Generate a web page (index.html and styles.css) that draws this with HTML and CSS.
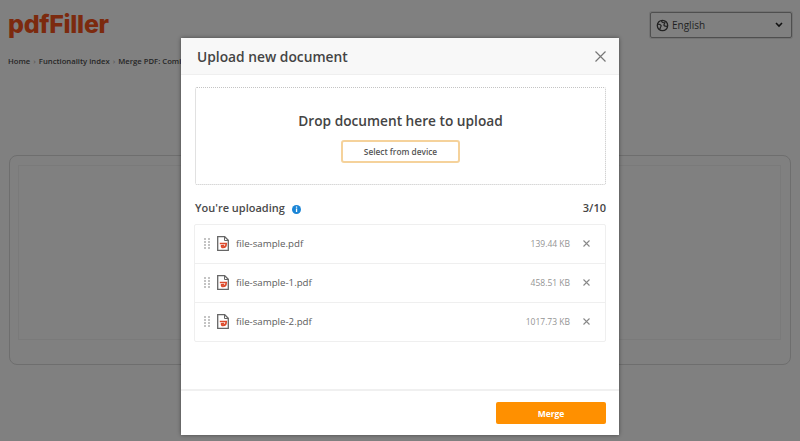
FILE: index.html
```html
<!DOCTYPE html>
<html lang="en">
<head>
<meta charset="utf-8">
<title>Upload new document</title>
<link rel="stylesheet" href="styles.css">
</head>
<body>
<div class="page">
  <header class="top">
    <div class="logo">pdfFiller</div>
    <div class="lang">
      <svg class="globe" width="13" height="13" viewBox="0 0 14 14"><circle cx="7" cy="7" r="5.6" fill="none" stroke="#222" stroke-width="1.4"/><path d="M2 5.5c2 0 3 .5 3.500 1.500s-1 1.500-1 3l-.5 1.500M12 8c-2 0-3.500-.5-3.500-1.500S10 5 9.500 2.500M6 2c0 1.500 1 2 2.500 2" fill="none" stroke="#222" stroke-width="1.300"/></svg>
      <span class="lang-name">English</span>
      <svg class="caret" width="8" height="6" viewBox="0 0 8 6"><path d="M1 1l3 3 3-3" fill="none" stroke="#111" stroke-width="1.600"/></svg>
    </div>
  </header>
  <nav class="crumbs"><span>Home</span><i>›</i><span>Functionality index</span><i>›</i><span>Merge PDF: Comi</span></nav>
  <section class="card"><div class="card-inner"></div></section>
</div>

<div class="modal">
  <div class="modal-head">
    <h1>Upload new document</h1>
    <svg class="close" width="11" height="11" viewBox="0 0 11 11"><path d="M.5.500l10 10M10.500.500l-10 10" stroke="#777" stroke-width="1.200" fill="none"/></svg>
  </div>
  <div class="modal-body">
    <div class="drop">
      <h2>Drop document here to upload</h2>
      <button class="select">Select from device</button>
    </div>
    <div class="up-head">
      <div class="up-title">You're uploading
        <svg class="info" width="9" height="9" viewBox="0 0 9 9"><circle cx="4.500" cy="4.500" r="4.500" fill="#1a85d6"/><rect x="3.900" y="1.500" width="1.300" height="1.200" fill="#fff"/><rect x="3.900" y="3.500" width="1.300" height="3.500" fill="#fff"/></svg>
      </div>
      <div class="up-count">3/10</div>
    </div>
    <ul class="files">
      <li class="file">
        <svg class="grip" width="6" height="11" viewBox="0 0 6 11"><g fill="#c4c4c4"><rect width="2" height="2"/><rect x="4" width="2" height="2"/><rect y="3" width="2" height="2"/><rect x="4" y="3" width="2" height="2"/><rect y="6" width="2" height="2"/><rect x="4" y="6" width="2" height="2"/><rect y="9" width="2" height="2"/><rect x="4" y="9" width="2" height="2"/></g></svg>
        <svg class="doc" width="12" height="15" viewBox="0 0 12 15"><path d="M.7.7h7l3.600 3.600v10H.7z" fill="#fff" stroke="#666" stroke-width="1.300"/><path d="M7.500.7v3.800h3.800" fill="none" stroke="#666" stroke-width="1"/><path d="M2.800 7.500h6.400c0 2.500-1.500 4-3.300 4-1 0-1.500-.8-1.300-1.800l2.600-.2" fill="none" stroke="#dc4a2c" stroke-width="1.700"/></svg>
        <span class="name">file-sample.pdf</span>
        <span class="size">139.44 KB</span>
        <svg class="x" width="7" height="7" viewBox="0 0 7 7"><path d="M.5.500l6 6M6.500.500l-6 6" stroke="#888" stroke-width="1.100" fill="none"/></svg>
      </li>
      <li class="file">
        <svg class="grip" width="6" height="11" viewBox="0 0 6 11"><g fill="#c4c4c4"><rect width="2" height="2"/><rect x="4" width="2" height="2"/><rect y="3" width="2" height="2"/><rect x="4" y="3" width="2" height="2"/><rect y="6" width="2" height="2"/><rect x="4" y="6" width="2" height="2"/><rect y="9" width="2" height="2"/><rect x="4" y="9" width="2" height="2"/></g></svg>
        <svg class="doc" width="12" height="15" viewBox="0 0 12 15"><path d="M.7.7h7l3.600 3.600v10H.7z" fill="#fff" stroke="#666" stroke-width="1.300"/><path d="M7.500.7v3.800h3.800" fill="none" stroke="#666" stroke-width="1"/><path d="M2.800 7.500h6.400c0 2.500-1.500 4-3.300 4-1 0-1.500-.8-1.300-1.800l2.600-.2" fill="none" stroke="#dc4a2c" stroke-width="1.700"/></svg>
        <span class="name">file-sample-1.pdf</span>
        <span class="size">458.51 KB</span>
        <svg class="x" width="7" height="7" viewBox="0 0 7 7"><path d="M.5.500l6 6M6.500.500l-6 6" stroke="#888" stroke-width="1.100" fill="none"/></svg>
      </li>
      <li class="file">
        <svg class="grip" width="6" height="11" viewBox="0 0 6 11"><g fill="#c4c4c4"><rect width="2" height="2"/><rect x="4" width="2" height="2"/><rect y="3" width="2" height="2"/><rect x="4" y="3" width="2" height="2"/><rect y="6" width="2" height="2"/><rect x="4" y="6" width="2" height="2"/><rect y="9" width="2" height="2"/><rect x="4" y="9" width="2" height="2"/></g></svg>
        <svg class="doc" width="12" height="15" viewBox="0 0 12 15"><path d="M.7.7h7l3.600 3.600v10H.7z" fill="#fff" stroke="#666" stroke-width="1.300"/><path d="M7.500.7v3.800h3.800" fill="none" stroke="#666" stroke-width="1"/><path d="M2.800 7.500h6.400c0 2.500-1.500 4-3.300 4-1 0-1.500-.8-1.300-1.800l2.600-.2" fill="none" stroke="#dc4a2c" stroke-width="1.700"/></svg>
        <span class="name">file-sample-2.pdf</span>
        <span class="size">1017.73 KB</span>
        <svg class="x" width="7" height="7" viewBox="0 0 7 7"><path d="M.5.500l6 6M6.500.500l-6 6" stroke="#888" stroke-width="1.100" fill="none"/></svg>
      </li>
    </ul>
  </div>
  <div class="modal-foot"><button class="merge">Merge</button></div>
</div>
</body>
</html>
```
FILE: styles.css
```css
* { box-sizing: border-box; margin: 0; padding: 0; }
html, body { height: 100%; overflow: hidden; }
body {
  background: #808080;
  font-family: "Open Sans", "Liberation Sans", sans-serif;
  position: relative;
}
.page { padding: 0 8px; height: 441px; display: flex; flex-direction: column; }
.top { display: flex; justify-content: space-between; align-items: flex-start; height: 50px; }
.logo {
  font-family: Inter, "Open Sans", sans-serif;
  font-size: 25px;
  font-weight: 800;
  line-height: 24px;
  margin-top: 12px;
  color: #7c2a0e;
  letter-spacing: -.3px;
}
.lang {
  width: 142px; height: 26px; margin-top: 12px;
  border: 1px solid #4f4f4f; border-radius: 2px;
  display: flex; align-items: center; padding: 0 8px 0 5px;
  box-shadow: 0 0 0 1px #737373;
}
.globe { margin-right: 3px; }
.lang-name { font-size: 10px; color: #1f1f1f; flex: 1; }
.crumbs { font-size: 7.700px; font-weight: 600; color: #262626; display: flex; gap: 3px; margin-top: 5px; line-height: 12px; white-space: nowrap; }
.crumbs i { font-style: normal; color: #5a5a5a; }
.card {
  margin-top: 88px; margin-left: 1px; margin-right: 1px; height: 210px;
  border: 1px solid #6e6e6e; border-radius: 8px; padding: 9px 9px 24px 8px;
}
.card-inner { height: 100%; border: 1px solid #7a7a7a; }

.modal {
  position: absolute; left: 181px; top: 38px; width: 438px; height: 397px;
  background: #fff; display: flex; flex-direction: column;
  box-shadow: 0 0 4px rgba(0, 0, 0, .45);
}
.modal-head {
  height: 37px; background: #f8f8f8; border-bottom: 1px solid #efefef;
  display: flex; align-items: center; justify-content: space-between;
  padding: 1px 13px 0 16px; flex: none;
}
.modal-head h1 { font-size: 13.800px; font-weight: 600; color: #444; line-height: 20px; }
.modal-body { flex: 1; padding: 12px 13px 0 14px; }
.drop {
  height: 98px; border: 1px dotted #c4c4c4; border-radius: 2px;
  display: flex; flex-direction: column; align-items: center; padding-top: 23px;
}
.drop h2 { font-size: 13.700px; font-weight: 600; color: #444; line-height: 19px; }
.select {
  margin-top: 10px; width: 119px; height: 23px; background: #fff;
  border: 2px solid #f5d29b; border-radius: 3px;
  font: 600 8.300px "Open Sans", sans-serif; color: #555;
}
.up-head { display: flex; justify-content: space-between; align-items: center; margin-top: 13px; height: 19px; }
.up-title { font-size: 11px; font-weight: 600; color: #4a4a4a; display: flex; align-items: center; }
.info { margin-left: 7px; margin-top: 3px; }
.up-count { font-size: 11px; font-weight: 600; color: #444; }
.files { list-style: none; margin: 7px 0 0 -1px; border: 1px solid #efefef; border-radius: 2px; }
.file { height: 39px; display: flex; align-items: center; padding: 0 15px 0 9px; border-bottom: 1px solid #efefef; }
.file:last-child { border-bottom: 0; height: 38px; }
.grip { margin-top: -1px; }
.doc { margin: -1px 0 0 7px; }
.name { font-size: 9.700px; color: #5c5c5c; margin: -1px 0 0 7px; flex: 1; }
.size { font-size: 8.500px; color: #949494; margin: -1px 13px 0 0; }
.x { margin-top: -1px; }
.modal-foot {
  height: 46px; flex: none; border-top: 2px solid #f0f0f0;
  display: flex; justify-content: flex-end; align-items: flex-start;
  padding: 11px 13px 0 0;
}
.merge {
  width: 110px; height: 22px; border: 0; border-radius: 2px;
  background: #ff9000; color: #fff;
  font: 700 8.500px "Open Sans", sans-serif;
}
```
